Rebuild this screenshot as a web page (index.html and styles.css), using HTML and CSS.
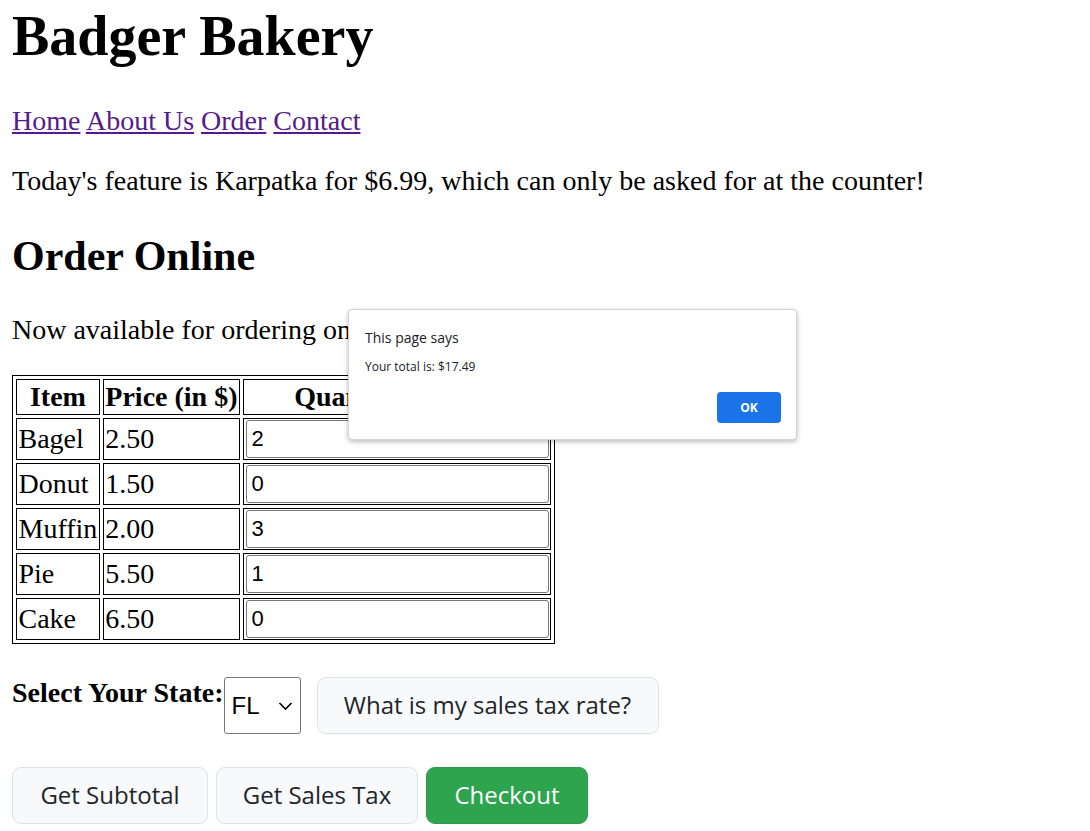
FILE: index.html
```html
<!DOCTYPE html>
<html lang="en">
<head>
<meta charset="utf-8">
<title>Badger Bakery</title>
<link rel="stylesheet" href="styles.css">
</head>
<body>
<h1 class="title">Badger Bakery</h1>
<p class="nav"><a href="#">Home</a> <a href="#">About Us</a> <a href="#">Order</a> <a href="#">Contact</a></p>
<p class="text">Today's feature is Karpatka for $6.99, which can only be asked for at the counter!</p>
<h2 class="subtitle">Order Online</h2>
<p class="text">Now available for ordering online!</p>
<table class="order">
  <tr><th>Item</th><th>Price (in $)</th><th>Quantity Desired</th></tr>
  <tr><td>Bagel</td><td>2.50</td><td><input class="qty" type="text" value="2"></td></tr>
  <tr><td>Donut</td><td>1.50</td><td><input class="qty" type="text" value="0"></td></tr>
  <tr><td>Muffin</td><td>2.00</td><td><input class="qty" type="text" value="3"></td></tr>
  <tr><td>Pie</td><td>5.50</td><td><input class="qty" type="text" value="1"></td></tr>
  <tr><td>Cake</td><td>6.50</td><td><input class="qty" type="text" value="0"></td></tr>
</table>
<div class="state-row">
  <b class="state-label">Select Your State:</b>
  <span class="select-wrap">
    <select class="state-select">
      <option>FL</option>
      <option>WI</option>
      <option>IL</option>
    </select>
    <svg class="chevron" width="15" height="10" viewBox="0 0 15 10"><path d="M1.5 2 L7.5 8 L13.5 2" fill="none" stroke="#000" stroke-width="1.6"/></svg>
  </span>
  <button class="btn btn-light btn-rate">What is my sales tax rate?</button>
</div>
<div class="actions">
  <button class="btn btn-light btn-subtotal">Get Subtotal</button>
  <button class="btn btn-light btn-tax">Get Sales Tax</button>
  <button class="btn btn-success btn-checkout">Checkout</button>
</div>
<div class="dialog">
  <div class="dialog-title">This page says</div>
  <div class="dialog-msg">Your total is: $17.49</div>
  <div class="dialog-actions"><button class="dialog-ok">OK</button></div>
</div>
</body>
</html>
```
FILE: styles.css
```css
html, body {
  background: #fff;
}
body {
  margin: 4px 12px 0;
  font-family: "Liberation Serif", "Times New Roman", serif;
  font-size: 28px;
  color: #000;
}
.title {
  font-size: 56px;
  margin: 0 0 36.5px;
}
.subtitle {
  font-size: 42px;
  margin: 35px 0 34px;
}
.text, .nav {
  margin: 28px 0;
}
.nav a {
  color: #551a8b;
}
.order {
  border: 1px solid #000;
  border-spacing: 3px;
  margin-top: 29px;
}
.order th, .order td {
  border: 1px solid #000;
  padding: 1px 1.5px;
}
.order th {
  font-weight: bold;
  text-align: center;
}
.order td {
  text-align: left;
}
.qty {
  display: block;
  width: 303px;
  height: 38px;
  box-sizing: border-box;
  border: 1px solid #767676;
  border-radius: 3px;
  padding: 0 5px;
  margin: 0;
  font-family: "Liberation Sans", Arial, sans-serif;
  font-size: 22px;
  color: #000;
  background: #fff;
}
.state-row {
  display: flex;
  align-items: flex-start;
  margin-top: 33px;
}
.state-label {
  line-height: 32px;
}
.select-wrap {
  position: relative;
  display: block;
  width: 77px;
  height: 57px;
}
.state-select {
  appearance: none;
  -webkit-appearance: none;
  width: 77px;
  height: 57px;
  box-sizing: border-box;
  border: 1px solid #767676;
  border-radius: 3px;
  background: #fff;
  padding: 0 0 0 7px;
  margin: 0;
  font-family: "Liberation Sans", Arial, sans-serif;
  font-size: 24px;
  color: #000;
}
.chevron {
  position: absolute;
  left: 54px;
  top: 24px;
  pointer-events: none;
}
.btn {
  height: 57px;
  box-sizing: border-box;
  border: 1px solid #dee2e6;
  border-radius: 9px;
  padding: 0;
  margin: 0;
  font-family: "Open Sans", "Noto Sans", sans-serif;
  font-size: 24px;
  font-weight: 500;
  line-height: 36px;
  text-align: center;
}
.btn-light {
  background: #f8f9fa;
  color: #212529;
}
.btn-success {
  background: #2ea44f;
  border-color: #2b9a4a;
  color: #fff;
}
.btn-rate {
  margin-left: 16px;
  width: 342px;
}
.actions {
  display: flex;
  gap: 8px;
  margin-top: 33px;
}
.btn-subtotal { width: 196px; }
.btn-tax { width: 202px; }
.btn-checkout { width: 162px; }

.dialog {
  position: absolute;
  left: 348px;
  top: 309px;
  width: 449px;
  height: 131px;
  box-sizing: border-box;
  background: #fff;
  border: 1px solid #d4d4d4;
  border-radius: 4px;
  box-shadow: 0 2px 4px rgba(0, 0, 0, 0.2), 0 1px 8px rgba(0, 0, 0, 0.08);
  padding: 18px 15px 0 16px;
  font-family: "Open Sans", "Noto Sans", sans-serif;
  display: flex;
  flex-direction: column;
}
.dialog-title {
  font-size: 14px;
  line-height: 20px;
  color: #202124;
}
.dialog-msg {
  margin-top: 11px;
  font-size: 12px;
  line-height: 16px;
  color: #202124;
}
.dialog-actions {
  display: flex;
  justify-content: flex-end;
  margin-top: 17px;
}
.dialog-ok {
  width: 64px;
  height: 31px;
  border: 0;
  border-radius: 4px;
  background: #1a73e8;
  color: #fff;
  font-family: "Open Sans", "Noto Sans", sans-serif;
  font-size: 12px;
  font-weight: bold;
  padding: 0;
}
```
